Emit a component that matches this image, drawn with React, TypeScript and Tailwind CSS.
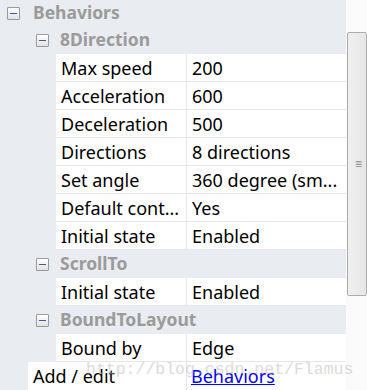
import React from 'react';

type Row = { name: string; value: string };

const groups: { title: string; rows: Row[] }[] = [
  {
    title: '8Direction',
    rows: [
      { name: 'Max speed', value: '200' },
      { name: 'Acceleration', value: '600' },
      { name: 'Deceleration', value: '500' },
      { name: 'Directions', value: '8 directions' },
      { name: 'Set angle', value: '360 degree (sm...' },
      { name: 'Default cont...', value: 'Yes' },
      { name: 'Initial state', value: 'Enabled' },
    ],
  },
  { title: 'ScrollTo', rows: [{ name: 'Initial state', value: 'Enabled' }] },
  { title: 'BoundToLayout', rows: [{ name: 'Bound by', value: 'Edge' }] },
];

function MinusBox() {
  return (
    <div className="w-[13px] h-[13px] border border-[#9a9a9a] rounded-[1px] bg-gradient-to-b from-[#ffffff] to-[#e2e2e2] flex items-center justify-center shrink-0">
      <div className="w-[7px] h-[1px] bg-[#3c5a9a]" />
    </div>
  );
}

function PropRow({ name, value }: Row) {
  return (
    <div className="ml-[56px] h-[28px] flex bg-white border-b border-[#e6e6e6] text-[18px] text-black leading-none">
      <div className="w-[131px] border-r border-[#e6e6e6] pl-[5px] flex items-center whitespace-nowrap overflow-hidden">
        {name}
      </div>
      <div className="flex-1 pl-[5px] flex items-center whitespace-nowrap overflow-hidden">{value}</div>
    </div>
  );
}

export default function App() {
  return (
    <div
      className="relative w-[367px] h-[390px] flex overflow-hidden bg-gradient-to-r from-[#eeeeee] to-[#fbfbfb]"
      style={{ fontFamily: '"Noto Sans", "Open Sans", sans-serif' }}
    >
      <div className="w-[349px] bg-[#e9ecf0] flex flex-col">
        {/* root category */}
        <div className="h-[26px] flex items-center pl-[7px] gap-[13px]">
          <MinusBox />
          <span className="font-bold text-[17.5px] text-[#9b9b9b] leading-none">Behaviors</span>
        </div>

        {groups.map((g) => (
          <div key={g.title}>
            <div className="h-[28px] flex items-center pl-[36px] gap-[11px]">
              <MinusBox />
              <span className="font-bold text-[17.5px] text-[#9b9b9b] leading-none">{g.title}</span>
            </div>
            {g.rows.map((r, i) => (
              <PropRow key={i} {...r} />
            ))}
          </div>
        ))}

        <div className="ml-[28px] h-[28px] flex bg-white text-[18px] leading-none">
          <div className="w-[159px] border-r border-[#e6e6e6] pl-[5px] flex items-center text-black">Add / edit</div>
          <div className="flex-1 pl-[4px] flex items-center">
            <span className="text-[#0000ff] underline">Behaviors</span>
          </div>
        </div>
      </div>

      {/* vertical scrollbar */}
      <div className="flex-1 pt-[32px] pl-[1px]">
        <div className="h-[264px] w-[20px] border border-[#acacac] rounded-[2px] bg-gradient-to-r from-[#f0f0f0] to-[#e6e6e6] flex items-center pl-[7px]">
          <span className="text-[#8a8a8a] text-[12px] leading-none">≡</span>
        </div>
      </div>

      {/* watermark */}
      <div
        className="absolute left-[86px] top-[358px] text-[16.5px] text-[#b8b8b8] opacity-50 whitespace-nowrap pointer-events-none"
        style={{ fontFamily: '"Liberation Mono", monospace' }}
      >
        http://blog.csdn.net/Flamus
      </div>
    </div>
  );
}
